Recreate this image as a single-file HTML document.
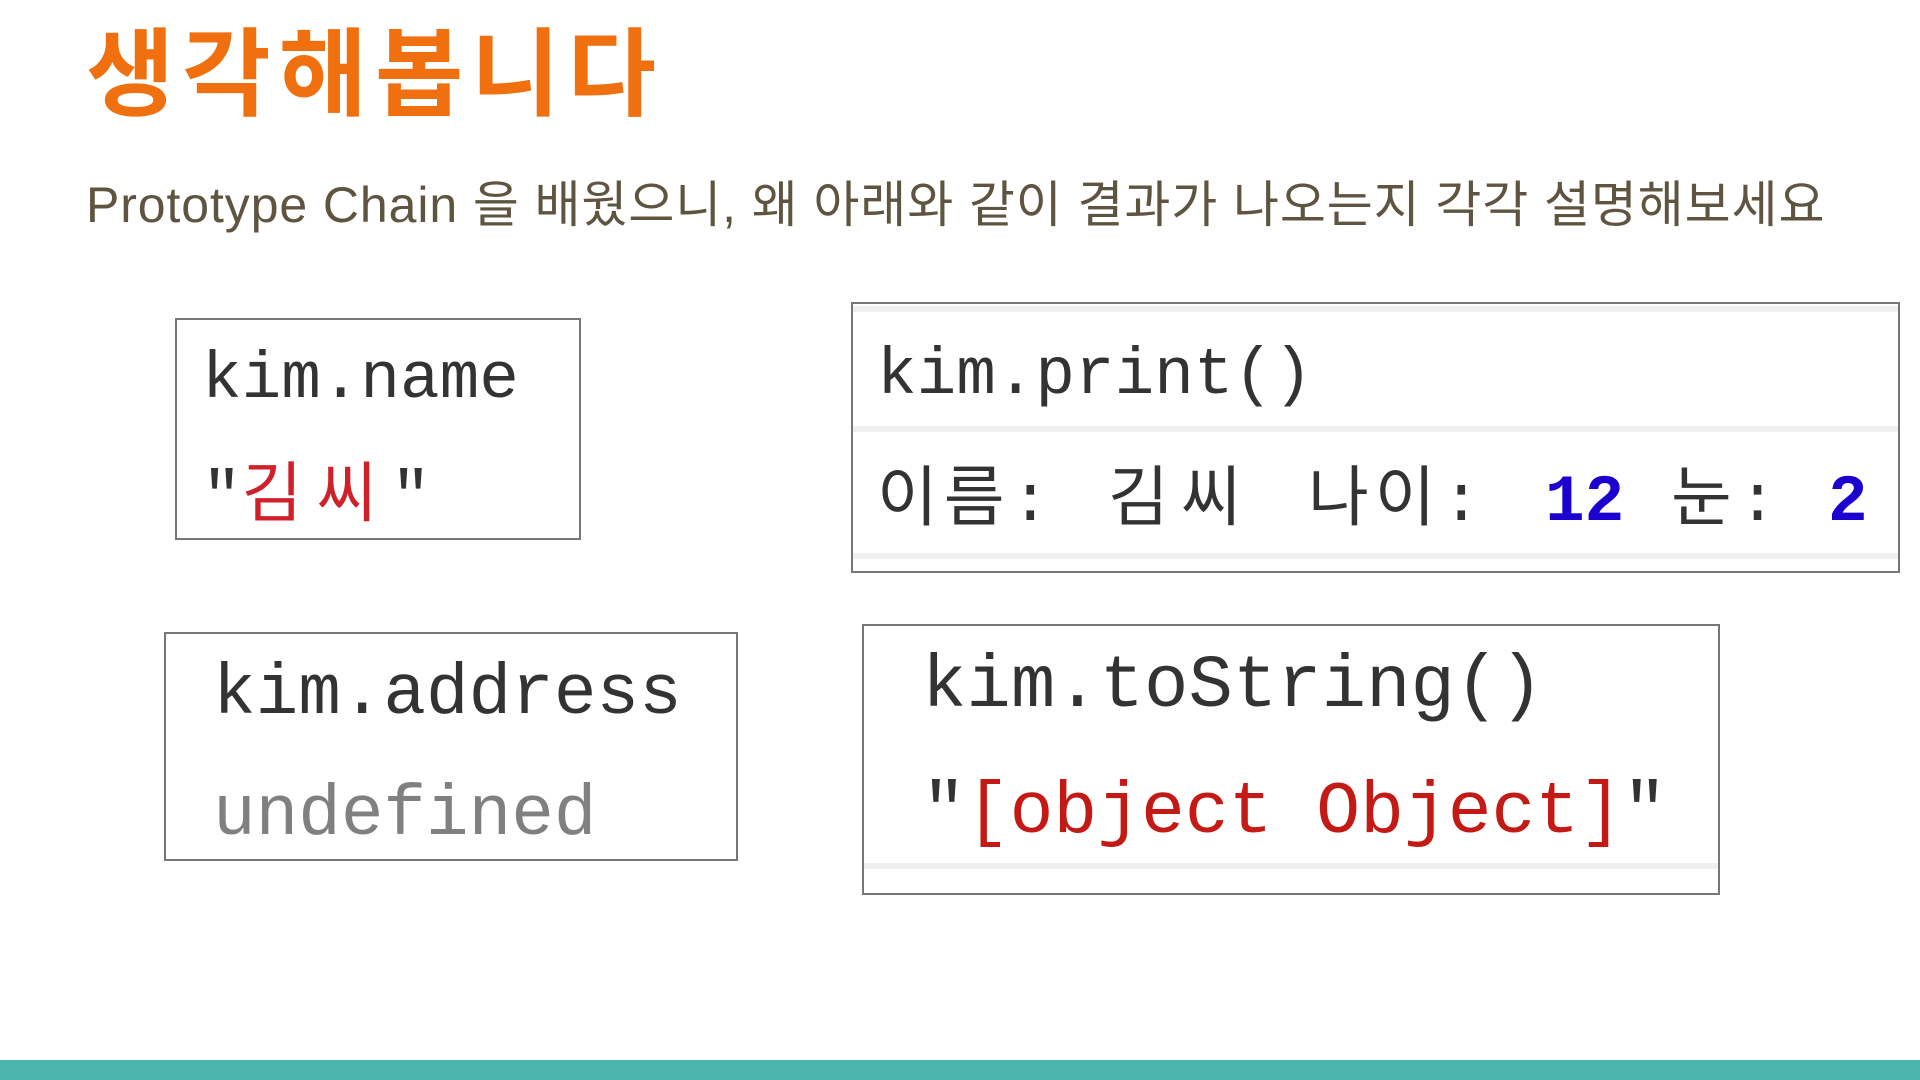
<!DOCTYPE html>
<html><head><meta charset="utf-8"><style>
body{margin:0;width:1920px;height:1080px;background:#fff;position:relative;overflow:hidden}
.a{position:absolute;white-space:nowrap;line-height:1}
.m{font-family:"Liberation Mono","Noto Sans CJK KR",monospace;color:#333}
.k{font-family:"Liberation Sans","Noto Sans CJK KR",sans-serif}
.box{position:absolute;border:2px solid #777;box-sizing:border-box;background:#fff}
.sep{position:absolute;height:6px;background:#f0f0f0}
</style></head><body>
<div class="a k" style="left:86px;top:28px;font-size:96px;font-weight:bold;color:#f07010;letter-spacing:8px">생각해봅니다</div>
<div class="a k" style="left:86px;top:180px;font-size:50px;color:#5e5440;letter-spacing:0.9px">Prototype Chain 을 배웠으니, 왜 아래와 같이 결과가 나오는지 각각 설명해보세요</div>

<div class="box" style="left:175px;top:318px;width:406px;height:222px"></div>
<div class="a m" style="left:202px;top:347px;font-size:66px">kim.name</div>
<div class="a m" style="left:202px;top:466px;font-size:66px">"<span style="color:#d0212a;letter-spacing:14px">김씨</span>"</div>

<div class="box" style="left:851px;top:302px;width:1049px;height:271px"></div>
<div class="sep" style="left:853px;top:306px;width:1045px"></div>
<div class="sep" style="left:853px;top:426px;width:1045px"></div>
<div class="sep" style="left:853px;top:553px;width:1045px"></div>
<div class="a m" style="left:877px;top:343px;font-size:66px">kim.print()</div>
<div class="a m" style="left:877px;top:470px;font-size:66px;letter-spacing:6px">이름:</div>
<div class="a m" style="left:1108px;top:470px;font-size:66px;letter-spacing:12px">김씨</div>
<div class="a m" style="left:1308px;top:470px;font-size:66px;letter-spacing:6px">나이:</div>
<div class="a m" style="left:1545px;top:470px;font-size:66px;color:#1c00cf;font-weight:bold">12</div>
<div class="a m" style="left:1671px;top:470px;font-size:66px;letter-spacing:6px">눈:</div>
<div class="a m" style="left:1828px;top:470px;font-size:66px;color:#1c00cf;font-weight:bold">2</div>

<div class="box" style="left:164px;top:632px;width:574px;height:229px"></div>
<div class="a m" style="left:213px;top:660px;font-size:71px">kim.address</div>
<div class="a m" style="left:213px;top:781px;font-size:71px;color:#808080">undefined</div>

<div class="box" style="left:862px;top:624px;width:858px;height:271px"></div>
<div class="sep" style="left:864px;top:863px;width:854px"></div>
<div class="a m" style="left:922px;top:650px;font-size:74px">kim.toString()</div>
<div class="a m" style="left:922px;top:776px;font-size:73px">"<span style="color:#c41a16">[object Object]</span>"</div>

<div style="position:absolute;left:0;top:1060px;width:1920px;height:20px;background:#4db6ac"></div>
</body></html>
